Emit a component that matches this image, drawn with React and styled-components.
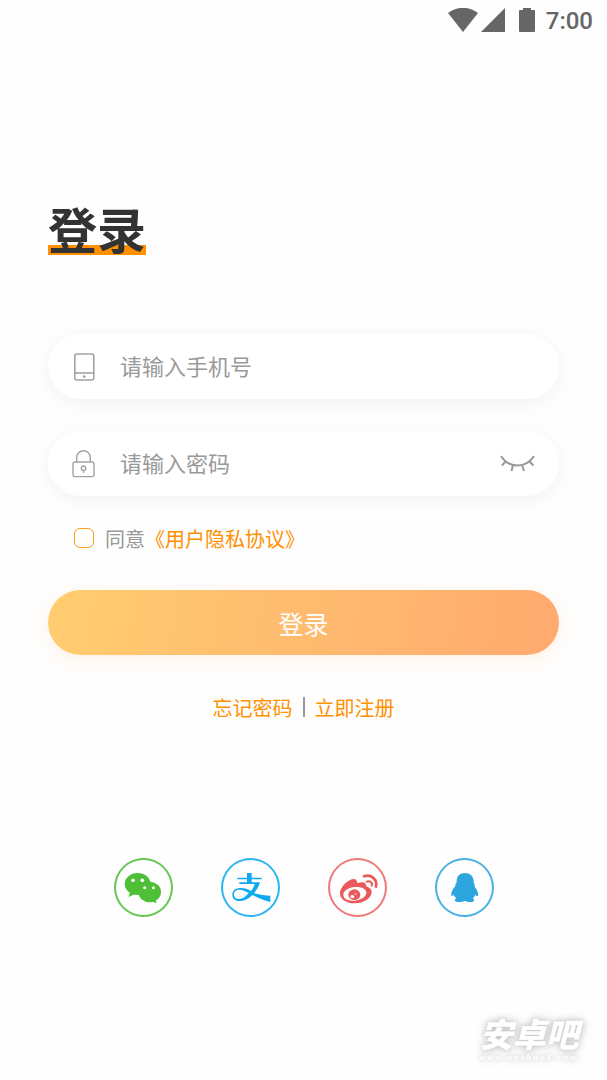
import { useState } from "react";
import styled, { createGlobalStyle } from "styled-components";

function StatusBar() {
    return (<Status>
        <svg width="30" height="24" viewBox="0 0 30 24" fill="#666">
            <path d="M0 5C9-2 21-2 30 5L15 24Z"/>
        </svg>
        <svg width="24" height="24" viewBox="0 0 24 24" fill="#666">
            <path d="M24 0V24H0Z"/>
        </svg>
        <Battery width="16" height="24" viewBox="0 0 16 24" fill="#666">
            <path d="M4 0H12V2H15Q16 2 16 3V23Q16 24 15 24H1Q0 24 0 23V3Q0 2 1 2H4Z"/>
        </Battery>
        <Clock>7:00</Clock>
    </Status>)
}

function PhoneIcon() {
    return (<svg width="24" height="30" viewBox="0 0 24 30" fill="none" stroke="#a3a3a3" strokeWidth="1.6">
        <rect x="2.8" y="2" width="19" height="26" rx="2"/>
        <path d="M3 21H22"/>
        <circle cx="12.3" cy="24.5" r="1.3" fill="#999" stroke="none"/>
    </svg>)
}

function LockIcon() {
    return (<svg width="24" height="30" viewBox="0 0 24 30" fill="none" stroke="#a3a3a3" strokeWidth="1.4">
        <rect x="1" y="13" width="21" height="14.6" rx="2"/>
        <path d="M4.7 13V8.5A6.8 6.8 0 0 1 18.3 8.5V13M11.5 21.5V24"/>
        <circle cx="11.5" cy="19.2" r="2.2"/>
    </svg>)
}

function ClosedEyeIcon() {
    return (<svg width="36" height="20" viewBox="0 0 36 20" fill="none" stroke="#999" strokeWidth="2">
        <path d="M2 2Q8 11.5 18.5 11.5Q29 11.5 35 2M6.5 7.5L3 11.5M14 11L12.5 17M23 11L25 17M30.5 7.5L34.5 11.5"/>
    </svg>)
}

function WechatLogo() {
    return (<svg viewBox="42 39 177 177" fill="#4ebf37">
        <ellipse cx="113" cy="117" rx="39" ry="33"/>
        <path d="M91 139L86 156L106 147Z"/>
        <ellipse cx="149" cy="141" rx="34" ry="31"/>
        <path d="M155 168L169 175L167 158Z"/>
        <g fill="#fff">
            <circle cx="99" cy="106" r="5.5"/>
            <circle cx="127" cy="106" r="5.5"/>
            <circle cx="134" cy="128" r="4.5"/>
            <circle cx="160" cy="128" r="4.5"/>
        </g>
    </svg>)
}

function AlipayLogo() {
    return (<svg viewBox="362 39 177 177" fill="#0caaf0">
        <path d="M440 84H454V98H484V103H454V112H479C475 125 469 136 461 145C480 150 494 152 510 152V171C489 166 472 157 456 150C444 162 431 168 418 168C403 168 396 159 396 149C396 137 406 129 422 129C433 129 443 133 452 138C457 132 461 125 463 117H417V112H440V103H411V98H440ZM445 144C435 138 426 134 418 134C407 134 401 140 401 149C401 157 407 162 417 162C428 162 437 154 445 144Z"/>
    </svg>)
}

function WeiboLogo() {
    return (<svg viewBox="52 39 177 177" fill="#eb5a5a">
        <path fillRule="evenodd" d="M88 147C87 131 102 113 118 105C129 99 140 101 140 115C151 110 168 110 167 124C176 127 183 132 183 142C182 160 160 175 132 175C108 175 89 164 88 147ZM98 150C99 162 114 169 133 167C153 165 168 154 167 142C166 131 151 124 132 126C112 128 97 138 98 150Z"/>
        <ellipse cx="131" cy="149" rx="18" ry="16"/>
        <ellipse cx="125" cy="155" rx="6" ry="5" fill="#fff"/>
        <circle cx="135" cy="147" r="2.5" fill="#fff"/>
        <g fill="none" stroke="#eb5a5a" strokeLinecap="round">
            <path d="M160 94C181 87 201 103 196 125" strokeWidth="8"/>
            <path d="M168 110C179 106 187 114 183 122" strokeWidth="6"/>
        </g>
    </svg>)
}

function QQLogo() {
    return (<svg viewBox="372 39 177 177" fill="#2da5df">
        <path d="M437 109C437 93 447 84 462 84C477 84 488 94 488 109V114C491 117 492 121 491 125C497 132 503 143 501 153C498 154 495 151 493 149C491 155 488 158 485 160C492 164 491 170 482 171C473 172 465 170 461 167C456 171 445 172 438 171C429 169 430 163 436 160C432 157 430 153 428 149C426 151 424 154 421 152C420 142 425 132 433 124C432 120 434 116 437 113Z"/>
    </svg>)
}

const socials = [
    { name: "微信", color: "#65c654", Logo: WechatLogo },
    { name: "支付宝", color: "#2cb5f1", Logo: AlipayLogo },
    { name: "微博", color: "#ee7a7a", Logo: WeiboLogo },
    { name: "QQ", color: "#4ab1e2", Logo: QQLogo },
];

function App() {
    const [showPassword, setShowPassword] = useState(false);

    return (<Page>
        <GlobalStyle/>
        <StatusBar/>
        <Form onSubmit={e => e.preventDefault()}>
            <Title>登录</Title>
            <Fields>
                <Field>
                    <PhoneIcon/>
                    <Input type="tel" placeholder="请输入手机号" aria-label="手机号"/>
                </Field>
                <Field>
                    <LockIcon/>
                    <Input type={showPassword ? "text" : "password"} placeholder="请输入密码" aria-label="密码"/>
                    <IconButton type="button" aria-label="显示密码" onClick={() => setShowPassword(!showPassword)}>
                        <ClosedEyeIcon/>
                    </IconButton>
                </Field>
            </Fields>
            <Agreement>
                <Checkbox type="checkbox" id="agree"/>
                <label htmlFor="agree">同意</label>
                <Link href="#privacy">《用户隐私协议》</Link>
            </Agreement>
            <SubmitButton type="submit">登录</SubmitButton>
            <Links>
                <Link href="#forgot">忘记密码</Link>
                <Divider/>
                <Link href="#register">立即注册</Link>
            </Links>
        </Form>
        <Socials>
            {socials.map(({ name, color, Logo }) => (
                <SocialButton key={name} type="button" aria-label={name} $color={color}>
                    <Logo/>
                </SocialButton>
            ))}
        </Socials>
        <Watermark>
            <Brand>安卓吧</Brand>
            <Site>www.anzhuo8.com</Site>
        </Watermark>
    </Page>)
}

export default App;

const GlobalStyle = createGlobalStyle`
  * {
    box-sizing: border-box;
  }

  body {
    margin: 0;
    background: #fefefe;
    font-family: "Noto Sans CJK SC", sans-serif;
  }

  button, input {
    font-family: inherit;
  }
`;

const Page = styled.main`
  position: relative;
  min-height: 100vh;
`;

const Status = styled.header`
  display: flex;
  align-items: center;
  justify-content: flex-end;
  gap: 3px;
  height: 40px;
  padding-right: 14px;
`;

const Battery = styled.svg`
  margin: 0 8px 0 11px;
`;

const Clock = styled.span`
  color: #666;
  font-family: Roboto, sans-serif;
  font-size: 24px;
  font-weight: 500;
  line-height: 24px;
  padding-top: 2px;
`;

const Form = styled.form`
  padding: 156px 48px 0;
`;

const Title = styled.h1`
  width: fit-content;
  margin: 0 0 77px;
  padding-top: 2px;
  background: linear-gradient(#ff9000, #ff9000) left bottom 2px / 100% 10px no-repeat;
  color: #333;
  font-size: 49px;
  font-weight: 700;
  line-height: 59px;
`;

const Fields = styled.div`
  display: flex;
  flex-direction: column;
  gap: 32px;
`;

const Field = styled.div`
  display: flex;
  align-items: center;
  height: 65px;
  padding: 0 24px;
  border-radius: 33px;
  background: #fff;
  box-shadow: 0 4px 20px rgba(0, 0, 0, 0.05);
`;

const Input = styled.input`
  flex: 1;
  min-width: 0;
  height: 100%;
  margin-left: 24px;
  padding: 0 0 4px;
  border: none;
  outline: none;
  background: none;
  color: #333;
  font-size: 22px;

  &::placeholder {
    color: #999;
    opacity: 1;
  }
`;

const IconButton = styled.button`
  display: flex;
  padding: 0;
  border: none;
  background: none;
  cursor: pointer;
`;

const Agreement = styled.div`
  display: flex;
  align-items: center;
  height: 30px;
  margin: 27px 0 37px 26px;
  color: #999;
  font-size: 20px;
`;

const Checkbox = styled.input`
  appearance: none;
  width: 20px;
  height: 20px;
  margin: 0 11px 0 0;
  border: 1px solid #ff9c1c;
  border-radius: 6px;

  &:checked {
    background: #ff9000;
  }
`;

const Link = styled.a`
  color: #ff9000;
  font-size: 20px;
  text-decoration: none;
`;

const SubmitButton = styled.button`
  display: block;
  width: 100%;
  height: 65px;
  padding: 0;
  border: none;
  border-radius: 33px;
  background: linear-gradient(100deg, #ffcd70, #ffa96e);
  box-shadow: 0 4px 20px rgba(255, 160, 60, 0.14);
  color: #fff;
  font-size: 25px;
  cursor: pointer;
`;

const Links = styled.nav`
  display: flex;
  align-items: center;
  justify-content: center;
  gap: 10px;
  height: 30px;
  margin-top: 37px;
`;

const Divider = styled.span`
  width: 2px;
  height: 20px;
  background: #999;
`;

const Socials = styled.div`
  display: flex;
  justify-content: center;
  gap: 48px;
  padding: 136px 0 40px;
`;

const SocialButton = styled.button`
  display: flex;
  width: 59px;
  height: 59px;
  padding: 0;
  border: none;
  border-radius: 50%;
  background: none;
  box-shadow: inset 0 0 0 2px ${props => props.$color};
  cursor: pointer;

  svg {
    width: 100%;
    height: 100%;
  }
`;

const Watermark = styled.div`
  position: absolute;
  right: 28px;
  bottom: 18px;
  display: flex;
  flex-direction: column;
  align-items: center;
  color: #fff;
  text-shadow: 0 0 4px #ccc, 0 0 10px #bbb;
`;

const Brand = styled.span`
  font-size: 33px;
  font-style: italic;
  font-weight: 900;
  line-height: 38px;
`;

const Site = styled.span`
  font-family: "Liberation Serif", serif;
  font-size: 9px;
  font-style: italic;
  font-weight: 700;
  letter-spacing: 2px;
  line-height: 10px;
`;
